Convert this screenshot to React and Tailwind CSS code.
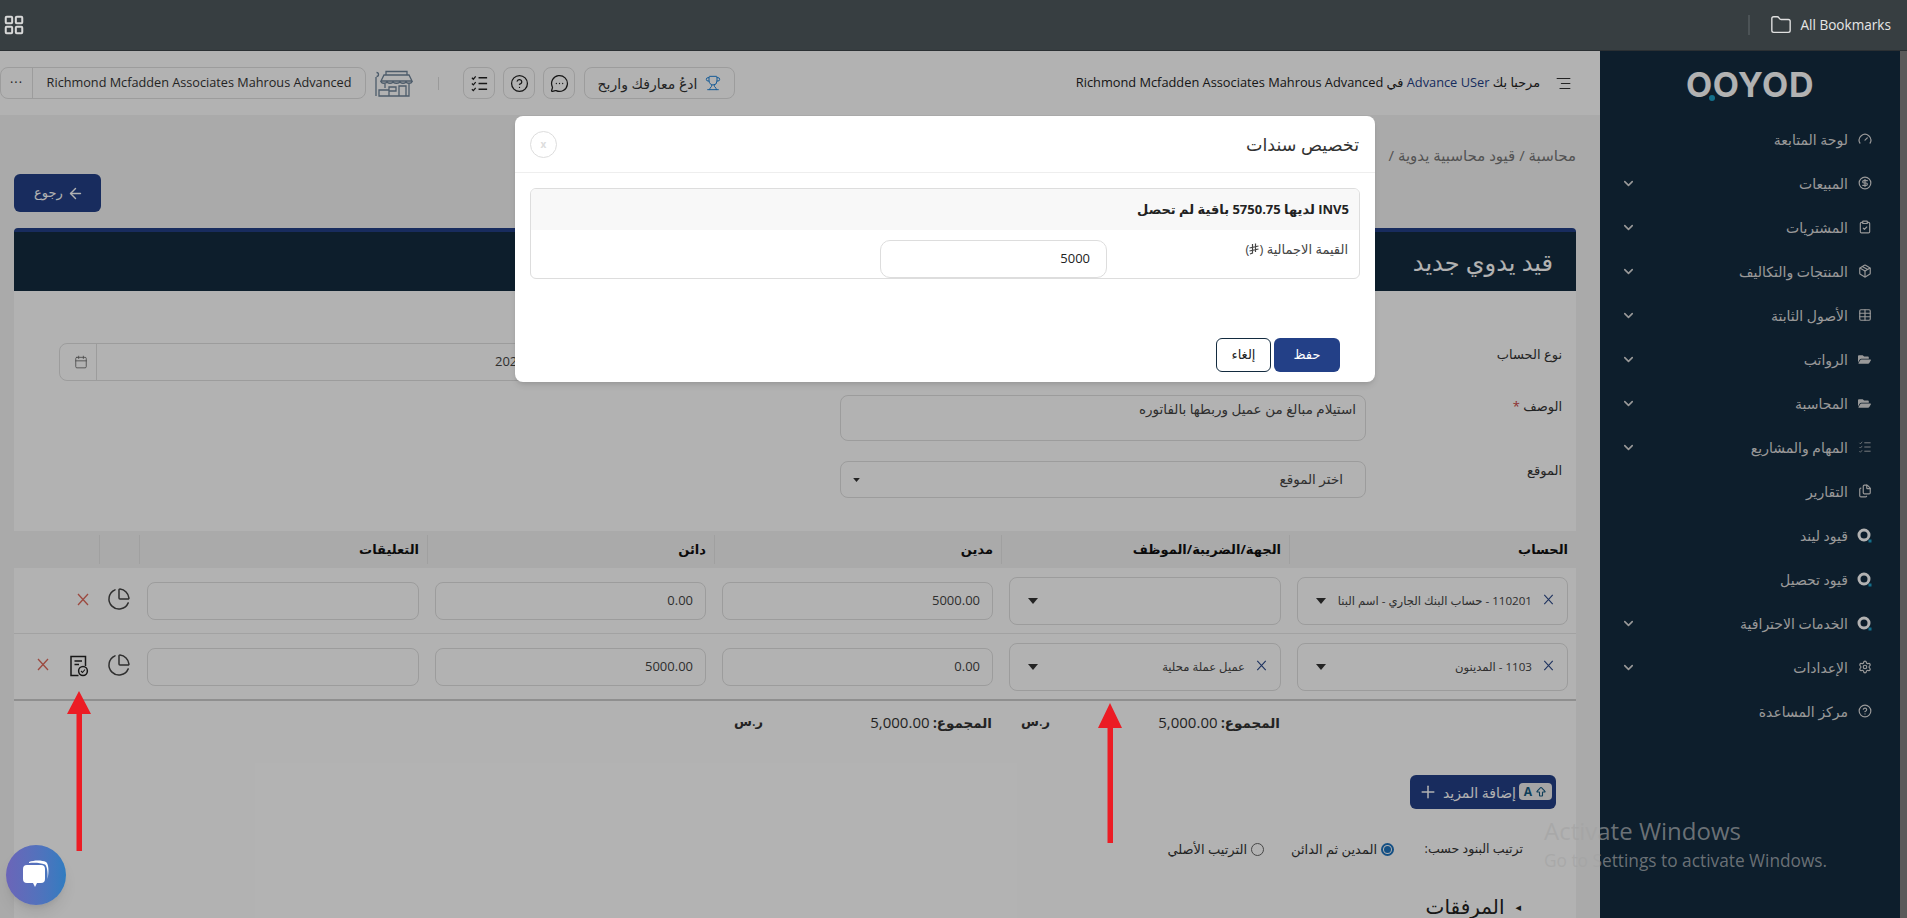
import React from "react";
import { LayoutGrid, Folder, ChevronDown, Gauge, CircleDollarSign, ClipboardCheck, Package, Table, Files, Settings, CircleHelp, Trophy, MessageCircleMore, ArrowLeft, Plus, Calendar, ChartPie, AlignRight, ArrowBigUp } from "lucide-react";
import { FaFolderOpen } from "react-icons/fa";

const OIcon = () => (
  <svg width="15" height="15" viewBox="0 0 15 15">
    <circle cx="7" cy="7" r="5" fill="none" stroke="#fff" strokeWidth="3" />
    <rect x="11.5" y="11.5" width="3" height="3" fill="#1ea0c8" />
  </svg>
);

const TaskList = ({ size = 19, sw = 1.6, color = "#222" }) => (
  <svg width={size} height={size} viewBox="0 0 20 20" fill="none" stroke={color} strokeWidth={sw}>
    <path d="M2 4 L3.5 5.5 L6 2.5 M2 10 L3.5 11.5 L6 8.5 M2 16 L3.5 17.5 L6 14.5" strokeWidth={sw * 0.8} />
    <path d="M9 4 H18 M9 10 H18 M9 16 H18" />
  </svg>
);

const Cross = ({ color, w = 12, h = 13, sw = 1.3 }) => (
  <svg width={w} height={h} viewBox="0 0 12 13" className="shrink-0">
    <path d="M1 1 L11 12 M11 1 L1 12" stroke={color} strokeWidth={sw} fill="none" />
  </svg>
);

const Caret = ({ w = 10, h = 6 }) => (
  <svg width={w} height={h} viewBox="0 0 10 6" className="shrink-0"><path d="M0 0 H10 L5 6 Z" fill="#333" /></svg>
);

const Riyal = () => (
  <svg width="10" height="12" viewBox="0 0 10 12" className="inline align-[-1px]">
    <path d="M3.5 1 V10 L1 11 M6.5 0.5 V9 M0.5 5 L9.5 3 M0.5 8 L9.5 6" stroke="#444" strokeWidth="1.2" fill="none" />
  </svg>
);

const menu = [
  ["لوحة المتابعة", <Gauge size={14} />, false],
  ["المبيعات", <CircleDollarSign size={14} />, true],
  ["المشتريات", <ClipboardCheck size={14} />, true],
  ["المنتجات والتكاليف", <Package size={14} />, true],
  ["الأصول الثابتة", <Table size={14} />, true],
  ["الرواتب", <FaFolderOpen size={13} />, true],
  ["المحاسبة", <FaFolderOpen size={13} />, true],
  ["المهام والمشاريع", <TaskList size={14} sw={1.1} color="#dcdcdc" />, true],
  ["التقارير", <Files size={14} />, false],
  ["قيود ليند", <OIcon />, false],
  ["قيود تحصيل", <OIcon />, false],
  ["الخدمات الاحترافية", <OIcon />, true],
  ["الإعدادات", <Settings size={14} />, true],
  ["مركز المساعدة", <CircleHelp size={14} />, false],
];

const Store = () => (
  <svg width="39" height="27" viewBox="0 0 39 27" fill="none" stroke="#6f8499" strokeWidth="1.3">
    <path d="M1.5 2.5 a1.6 1.6 0 1 1 0 4 M1 7 V26" />
    <path d="M11 5 V1.5 H32 V5" />
    <path d="M9 5 H34 L37 11 H6 Z" />
    <path d="M6 11 c0 3 6 3 6 0 c0 3 6 3 6 0 c0 3 7 3 7 0 c0 3 6 3 6 0 c0 3 6 3 6 0" />
    <path d="M10 14 V18 M34 14 V26 H4 V20 H14 V26 M14 17 H21 V21 H14 Z M24 26 V16 H31 V26" />
  </svg>
);

const DocCheck = () => (
  <svg width="20" height="22" viewBox="0 0 19 22" fill="none" stroke="#222" strokeWidth="1.5">
    <path d="M9 20.5 H1.5 V1.5 H16 V11" />
    <path d="M5 6 H12.5 M5 9.5 H9.5" />
    <circle cx="13.5" cy="16" r="4.4" />
    <path d="M11.5 16 l1.5 1.5 l2.5 -3" strokeWidth="1.1" />
  </svg>
);

const IconBtn = ({ children }) => (
  <div className="w-[32px] h-[32px] border border-[#e0e0e0] rounded-lg flex items-center justify-center">{children}</div>
);

const cols = "grid grid-cols-[287px_288px_287px_287px_288px_40px_85px]";

const Th = ({ children }) => (
  <div className="flex items-center px-2 font-bold text-[13px] text-[#111] border-l border-[#e6e6e6] h-[29px]">{children}</div>
);

const NumInput = ({ v }) => (
  <div className="mx-2 h-[38px] border border-[#e0e0e0] rounded-lg flex items-center px-3 text-[13px] text-[#444]">
    <span dir="ltr">{v}</span>
  </div>
);

const Sel = ({ text }) => (
  <div className="mx-2 h-[48px] border border-[#e0e0e0] rounded-lg flex items-center pr-[13px] pl-[18px] text-[11.6px] text-[#444]">
    {text ? <span className="mb-[4px]"><Cross color="#2d4a8a" w={11} h={11} /></span> : null}
    {text ? <span className="mr-[11px] whitespace-nowrap">{text}</span> : null}
    <span className="mr-auto"><Caret /></span>
  </div>
);

const Row = ({ account, party, debit, credit, doc, border }) => (
  <div className={`${cols} ${border ? "border-b border-[#e8e8e8] h-[66px]" : "h-[65px]"}`}>
    <div className="pt-[9px]"><Sel text={account} /></div>
    <div className="pt-[9px]"><Sel text={party} /></div>
    <div className="pt-[14px]"><NumInput v={debit} /></div>
    <div className="pt-[14px]"><NumInput v={credit} /></div>
    <div className="pt-[14px]"><div className="mx-2 h-[38px] border border-[#e0e0e0] rounded-lg" /></div>
    <div className="pt-[19px] flex justify-center"><ChartPie size={24} strokeWidth={1.5} color="#444" /></div>
    <div className="flex items-start gap-[20px] pt-[21px] pr-[10px]">
      {doc ? <DocCheck /> : null}
      <div className={doc ? "pt-[3px]" : "pt-[4px]"}><Cross color="#e06a5c" /></div>
    </div>
  </div>
);

const Total = () => (
  <div className="flex items-center justify-between pr-[9px] pl-[20px] text-[13px] text-[#333]">
    <span><b className="text-[13.5px]">المجموع:</b> <span className="text-[15px]">5,000.00</span></span>
    <b className="font-semibold">ر.س</b>
  </div>
);

export default function App() {
  return (
    <div className="relative w-[1907px] h-[918px] overflow-hidden font-['Open_Sans','DejaVu_Sans',sans-serif] bg-white">
      {/* browser bar */}
      <div className="h-[51px] bg-[#373e41] border-b border-[#2b3033] flex items-center justify-between pl-[3px] pr-[16px]">
        <LayoutGrid size={22} color="#d8d8d8" strokeWidth={2.2} />
        <div className="flex items-center">
          <div className="w-[2px] h-[20px] bg-[#4c5356] mr-[20px]" />
          <Folder size={22} color="#e0e0e0" strokeWidth={1.5} />
          <span className="ml-[8px] text-[13.6px] text-[#e6e6e6]">All Bookmarks</span>
        </div>
      </div>

      <div className="flex h-[867px]" dir="rtl">
        <div className="w-[7px] bg-[#818181] order-first" />
        {/* sidebar */}
        <div className="w-[300px] bg-[#142b3f] shrink-0">
          <div className="h-[66px] flex items-center justify-center pt-[2px]">
            <div className="relative font-['Inter',sans-serif] font-bold text-[34px] leading-none text-white tracking-[0.6px]" dir="ltr">
              OOYOD
              <span className="absolute left-[23px] bottom-[1px] w-[6px] h-[6px] rounded-sm bg-[#1ea0c8]" />
            </div>
          </div>
          {menu.map(([label, icon, chev]) => (
            <div key={label} className="h-[44px] flex items-center pr-[28px] pl-[21px] text-[14px] text-[#dcdcdc]">
              <span className="w-[15px] flex justify-center">{icon}</span>
              <span className="mr-[9px]">{label}</span>
              {chev ? <ChevronDown size={15} strokeWidth={2.5} className="mr-auto" /> : null}
            </div>
          ))}
        </div>

        {/* main */}
        <div className="flex-1 bg-[#f4f4f4] overflow-hidden">
          <div className="h-[64px] bg-white flex items-center justify-between pr-[28px]">
            <div className="flex items-center text-[12.8px] text-[#222]">
              <AlignRight size={17} strokeWidth={1.6} color="#333" />
              <span className="mr-[15px]">
                مرحبا بك <span className="text-[#234087]">Advance USer</span> في Richmond Mcfadden Associates Mahrous Advanced
              </span>
            </div>
            <div className="flex items-center">
              <div className="w-[151px] h-[32px] border border-[#e0e0e0] rounded-lg flex items-center justify-center gap-2 text-[14px] text-[#333]">
                <Trophy size={16} color="#1f83d8" strokeWidth={1.5} />
                <span>ادعُ معارفك واربح</span>
              </div>
              <div className="mr-[9px] flex gap-[8px]">
                <IconBtn><MessageCircleMore size={19} strokeWidth={1.6} color="#222" /></IconBtn>
                <IconBtn><CircleHelp size={19} strokeWidth={1.6} color="#222" /></IconBtn>
                <IconBtn><TaskList /></IconBtn>
              </div>
              <div className="mx-[24px] w-px h-[13px] bg-[#ddd]" />
              <Store />
              <div className="mr-[9px] w-[366px] h-[32px] border border-[#e0e0e0] rounded-lg flex items-center text-[12.7px] text-[#333]" dir="ltr">
                <span className="w-[32px] h-full border-r border-[#e0e0e0] flex items-center justify-center tracking-[1px]">···</span>
                <span className="flex-1 text-center whitespace-nowrap">Richmond Mcfadden Associates Mahrous Advanced</span>
              </div>
            </div>
          </div>

          <div className="pr-[24px] pl-[14px]">
            <div className="h-[59px] flex items-end pb-[8px] text-[15px] text-[#777]">محاسبة / قيود محاسبية يدوية /</div>
            <div className="flex justify-end">
              <div className="w-[87px] h-[38px] bg-[#234087] rounded-md flex items-center justify-center gap-1 pl-[3px] text-[13px] text-white">
                <ArrowLeft size={17} />
                <span>رجوع</span>
              </div>
            </div>

            {/* card */}
            <div className="mt-[16px] bg-white rounded-t h-[690px]">
              <div className="h-[63px] border-t-4 border-[#234087] bg-[#142b3f] rounded-t flex items-center pr-[23px] text-[24px] text-white">قيد يدوي جديد</div>

              <div className="pt-[52px] pr-[14px]">
                <div className="flex">
                  <div className="w-[196px] pt-[2px] text-[13px] text-[#333]">نوع الحساب</div>
                  <div className="w-[526px] h-[38px] border border-[#e0e0e0] rounded-lg" />
                  <div className="mr-[25px] w-[756px] h-[38px] border border-[#e0e0e0] rounded-lg flex items-center text-[13px] text-[#444]" dir="ltr">
                    <span className="w-[37px] h-full pl-[6px] border-r border-[#e0e0e0] flex items-center justify-center"><Calendar size={14} strokeWidth={1.4} color="#666" /></span>
                    <span className="ml-[398px]">2025-07-01</span>
                  </div>
                </div>
                <div className="flex mt-[14px]">
                  <div className="w-[196px] pt-[2px] text-[13px] text-[#333]">الوصف <span className="text-[#c44]">*</span></div>
                  <div className="w-[526px] h-[46px] border border-[#e0e0e0] rounded-lg px-[9px] pt-[3px] text-[13.5px] text-[#444]">استيلام مبالغ من عميل وربطها بالفاتوره</div>
                </div>
                <div className="flex mt-[20px]">
                  <div className="w-[196px] text-[13px] text-[#333]">الموقع</div>
                  <div className="w-[526px] h-[37px] border border-[#e0e0e0] rounded-lg flex items-center pr-[22px] pl-[12px] text-[13.5px] text-[#444]">
                    <span>اختر الموقع</span>
                    <span className="mr-auto"><Caret w={7} h={4} /></span>
                  </div>
                </div>
              </div>

              {/* table */}
              <div className={`${cols} mt-[33px] h-[37px] items-center bg-[#f4f4f4]`}>
                <Th>الحساب</Th>
                <Th>الجهة/الضريبة/الموظف</Th>
                <Th>مدين</Th>
                <Th>دائن</Th>
                <Th>التعليقات</Th>
                <Th />
                <div />
              </div>
              <Row border account="110201 - حساب البنك الجاري - اسم البنا" debit="5000.00" credit="0.00" />
              <Row account="1103 - المدينون" party="عميل عملة محلية" debit="0.00" credit="5000.00" doc />
              <div className={`${cols} h-[44px] border-t-2 border-[#cdcdcd] items-center`}>
                <div />
                <Total />
                <Total />
              </div>

              <div className="flex mt-[32px] pr-[20px]">
                <div className="relative w-[146px] h-[34px] bg-[#234087] rounded-md flex items-center pr-[40px] gap-[5px] text-[14px] text-white">
                  <span className="whitespace-nowrap">إضافة المزيد</span>
                  <Plus size={20} strokeWidth={1.8} />
                  <span className="absolute right-[4px] top-[8px] w-[33px] h-[17px] bg-[#ececec] rounded flex items-center justify-center gap-[3px] text-[12px] font-bold text-[#155a80]" dir="ltr">
                    A<ArrowBigUp size={12} strokeWidth={2.2} />
                  </span>
                </div>
              </div>

              <div className="flex items-center mt-[31px] pr-[53px] text-[13px] text-[#333]">
                <span className="w-[129px] text-[12.6px]">ترتيب البنود حسب:</span>
                <span className="w-[13px] h-[13px] rounded-full border-2 border-[#1e73be] flex items-center justify-center"><span className="w-[7px] h-[7px] rounded-full bg-[#1e73be]" /></span>
                <span className="mr-[4px] w-[113px]">المدين ثم الدائن</span>
                <span className="w-[13px] h-[13px] rounded-full border border-[#666]" />
                <span className="mr-[4px]">الترتيب الأصلي</span>
              </div>

              <div className="flex items-center mt-[37px] pr-[55px] text-[20px] leading-none text-[#222]">
                <span className="text-[11px] ml-[11px]">◂</span>
                <span>المرفقات</span>
              </div>
            </div>
          </div>
        </div>
      </div>

      {/* dim overlay */}
      <div className="absolute left-0 right-0 top-[51px] bottom-0 bg-black/30" />

      {/* windows watermark */}
      <div className="absolute left-[1544px] top-[819px] text-[rgba(163,163,163,0.63)] leading-none">
        <div className="text-[24px]">Activate Windows</div>
        <div className="text-[17.3px] mt-[9px]">Go to Settings to activate Windows.</div>
      </div>

      {/* annotation arrows */}
      <svg className="absolute left-[61px] top-[689px]" width="36" height="165" viewBox="0 0 36 165">
        <path d="M18 2 L30 25 H21 V162 H15.5 V25 H6 Z" fill="#ec1c24" />
      </svg>
      <svg className="absolute left-[1092px] top-[701px]" width="36" height="144" viewBox="0 0 36 144">
        <path d="M18 2 L30 27 H21 V142 H15.5 V27 H6 Z" fill="#ec1c24" />
      </svg>

      {/* chat */}
      <div className="absolute left-[6px] top-[845px] w-[60px] h-[60px] rounded-full bg-gradient-to-r from-[#6b65b8] to-[#2f7cc0] shadow-lg flex items-center justify-center">
        <svg width="32" height="32" viewBox="0 0 32 32">
          <path d="M9 3 C14 1 22 1 26 3 C29 5 29 14 27.5 20 C28 13 27 7 25 5.5 C20 3.5 14 3.5 9 4 Z" fill="#fff" />
          <path d="M7 6 H21 Q25 6 25 10 V20 Q25 24 21 24 H17 L15 28 L13 24 H7 Q3 24 3 20 V10 Q3 6 7 6 Z" fill="#fff" />
        </svg>
      </div>

      {/* modal */}
      <div className="absolute left-[515px] top-[116px] w-[860px] h-[266px] bg-white rounded-lg shadow-md flex flex-col" dir="rtl">
        <div className="h-[57px] border-b border-[#eee] flex items-center justify-between pr-[16px] pl-[15px] text-[17.5px] text-[#333]">
          <span>تخصيص سندات</span>
          <span className="w-[27px] h-[27px] rounded-full border border-[#ddd] flex items-center justify-center text-[10px] font-bold text-[#ddd]">x</span>
        </div>
        <div className="mx-[15px] mt-[15px] h-[91px] border border-[#ddd] rounded-md overflow-hidden">
          <div className="h-[41px] bg-[#f8f8f8] flex items-center pr-[10px] text-[13px] font-bold text-[#222]">INV5 لديها 5750.75 باقية لم تحصل</div>
          <div className="flex pr-[11px] pt-[10px]">
            <span className="w-[241px] text-[13px] text-[#444]">القيمة الاجمالية (<Riyal />)</span>
            <div className="w-[227px] h-[38px] border border-[#ddd] rounded-[10px] flex items-center pr-[16px] text-[13px] text-[#222]">5000</div>
          </div>
        </div>
        <div className="flex mt-[59px] pr-[35px] gap-[3px]">
          <div className="w-[66px] h-[34px] rounded-md bg-[#234087] text-white text-[13px] flex items-center justify-center">حفظ</div>
          <div className="w-[55px] h-[34px] rounded-md border border-[#132b3f] text-[#222] text-[13px] flex items-center justify-center">إلغاء</div>
        </div>
      </div>
    </div>
  );
}
